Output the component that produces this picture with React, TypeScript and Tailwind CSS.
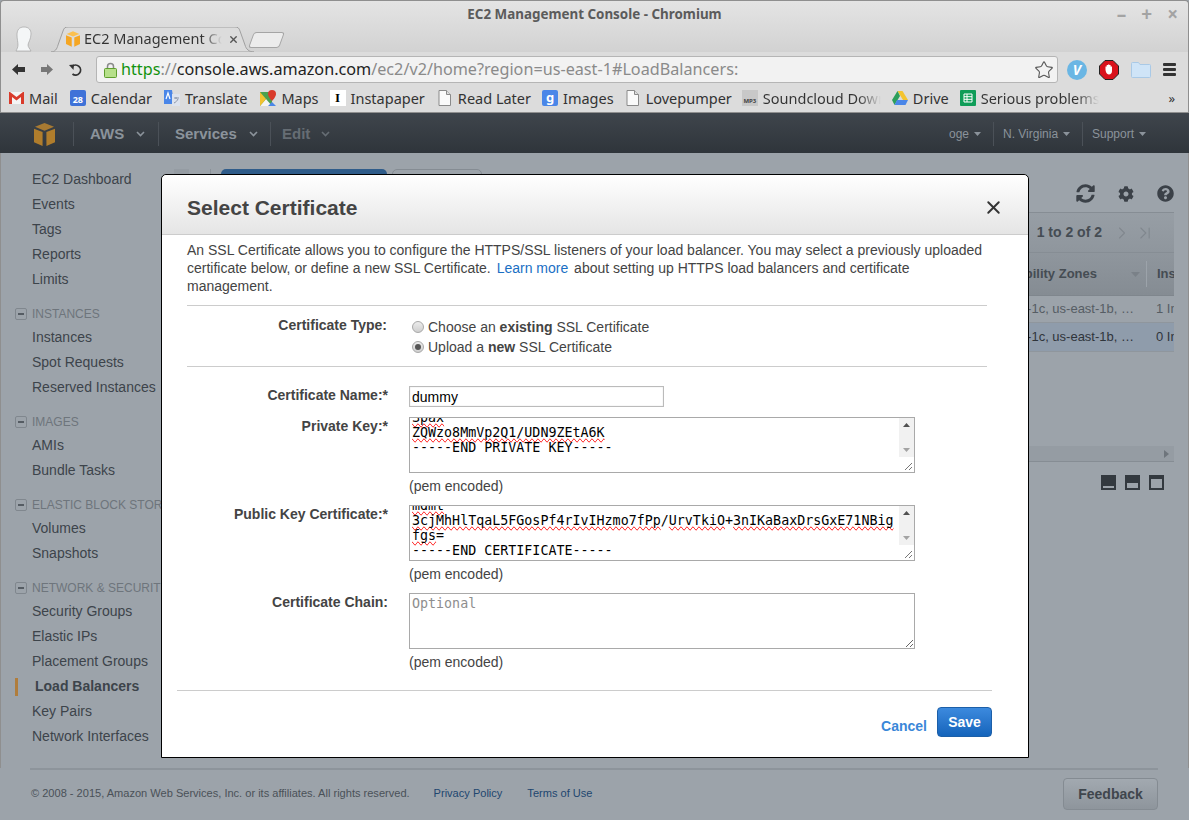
import { Star, X, ChevronRight, ChevronLast } from "lucide-react";
import { FaCog, FaQuestionCircle, FaSyncAlt } from "react-icons/fa";

const monoFont = { fontFamily: '"DejaVu Sans Mono", monospace' };

function Caret({ className }: { className: string }) {
  return (
    <svg width="9" height="6" viewBox="0 0 9 6" className={className}>
      <path d="M1 1l3.5 3.5L8 1" fill="none" stroke="currentColor" strokeWidth="1.6" />
    </svg>
  );
}

function SmallCaret() {
  return (
    <svg width="7" height="4" viewBox="0 0 7 4" className="ml-[5px] text-[#8b939b]">
      <path d="M0 0h7L3.5 4z" fill="currentColor" />
    </svg>
  );
}

function Cube({ size, light }: { size: number; light?: boolean }) {
  return (
    <svg width={size} height={size + 2} viewBox="0 0 22 24">
      <path d="M11 0l10 4-10 4L1 4z" fill={light ? "#fbc04f" : "#a87a32"} />
      <path d="M0 6l9 3.5V24l-9-4z" fill={light ? "#f5a623" : "#b07d2c"} />
      <path d="M22 6l-9 3.5V24l9-4z" fill={light ? "#f5a623" : "#b07d2c"} />
    </svg>
  );
}

function PageIcon() {
  return (
    <svg width="13" height="16" viewBox="0 0 13 16">
      <path d="M1 .5h7.5L12.5 4.500V15.500H1z" fill="#fafafa" stroke="#8a8a8a" />
      <path d="M8.500.5V4.500H12.500" fill="#ddd" stroke="#8a8a8a" />
    </svg>
  );
}

function Bookmark({ icon, label, fade, className }: { icon: React.ReactNode; label: string; fade?: boolean; className?: string }) {
  return (
    <div className={`flex items-center gap-[5px] ${className ?? ""}`}>
      <span className="flex h-4 w-4 shrink-0 items-center justify-center">{icon}</span>
      {fade ? (
        <span className="w-[118px] overflow-hidden whitespace-nowrap bg-gradient-to-r from-[#333] from-80% to-[#dcdcdc] bg-clip-text text-transparent">
          {label}
        </span>
      ) : (
        <span>{label}</span>
      )}
    </div>
  );
}

function TitleBar() {
  return (
    <div className="relative h-[52px] shrink-0 rounded-t-[4px] border-x border-t border-[#8f8f8f] bg-gradient-to-b from-[#e4e4e4] to-[#d2d2d2]">
      <p className="pt-[4px] text-center text-[13.400px] font-bold leading-[18px] text-[#5b5b5b]">
        EC2 Management Console - Chromium
      </p>
      <div className="absolute right-[10px] top-[3px] flex items-center gap-[15px] text-[19px] font-bold leading-[20px] text-[#a3a3a3]">
        <span>–</span>
        <span>+</span>
        <span>×</span>
      </div>
      <svg width="20" height="26" viewBox="0 0 20 26" className="absolute left-[13px] top-[25px]">
        <path d="M10 1C5 1 3 4 3 9c0 4 1 7 1 10 0 2-1 4-2 6h15c-1-2-3-4-3-6 0-2 3-6 3-11 0-4-2-7-7-7z" fill="#f4f6f7" stroke="#9a9a9a" strokeWidth=".6" />
      </svg>
      <div className="absolute bottom-0 left-[50px] h-[25px] w-[203px]">
        <svg width="203" height="25" viewBox="0 0 203 25" className="absolute inset-0">
          <path d="M0 25C4 25 6 22 7 18L12 4C13 1 14 0 17 0H184C187 0 188 1 189 4L194 18C195 22 198 25 203 25Z" fill="#dcdcdc" stroke="#a0a0a0" />
        </svg>
        <div className="relative flex h-full items-center pb-[1px] pl-[15px]">
          <Cube size={14} light />
          <span className="ml-[4px] w-[138px] overflow-hidden whitespace-nowrap bg-gradient-to-r from-[#333] from-85% to-[#dcdcdc] bg-clip-text text-[14.500px] text-transparent">
            EC2 Management Console
          </span>
          <X size={11} strokeWidth={3} className="ml-[6px] text-[#555]" />
        </div>
      </div>
      <div className="absolute left-[250px] top-[31px] h-[16px] w-[31px] -skew-x-[20deg] rounded-[3px] border border-[#a5a5a5] bg-[#ececec]" />
    </div>
  );
}

function Toolbar() {
  return (
    <div className="flex h-[33px] shrink-0 items-center border-x border-[#8f8f8f] bg-[#dcdcdc] pl-[11px] pt-[2px]">
      <svg width="13" height="11" viewBox="0 0 13 11">
        <path d="M0 5.500L6 0v3h7v5H6v3z" fill="#333" />
      </svg>
      <svg width="12" height="11" viewBox="0 0 12 11" className="ml-[16px]">
        <path d="M12 5.500L6 0v3H0v5h6v3z" fill="#777" />
      </svg>
      <svg width="14" height="14" viewBox="0 0 14 14" className="ml-[16px]">
        <path d="M3 3.500A5 5 0 1 1 3.500 11" fill="none" stroke="#333" strokeWidth="1.800" />
        <path d="M0 2l5-.5L4.500 7z" fill="#333" />
      </svg>
      <div className="ml-[13px] flex h-[27px] w-[962px] items-center rounded-[3px] border border-[#b5b5b5] bg-[#f2f2f2] pl-[7px] pr-[3px] text-[16.200px] leading-[25px] text-[#8a8a8a]">
        <svg width="13" height="16" viewBox="0 0 13 16">
          <path d="M3.500 7V4.500a3 3 0 0 1 6 0V7" fill="none" stroke="#8a8a8a" strokeWidth="1.500" />
          <rect x=".5" y="6.500" width="12" height="9" rx="1" fill="#b6e08a" stroke="#5f9e2f" />
        </svg>
        <span className="ml-[4px] whitespace-nowrap">
          <span className="text-[#12930f]">https</span>
          <span>://</span>
          <span className="text-[#222]">console.aws.amazon.com</span>
          /ec2/v2/home?region=us-east-1#LoadBalancers:
        </span>
        <Star size={20} strokeWidth={1.300} className="ml-auto text-[#555]" />
      </div>
      <div className="ml-[9px] flex h-[20px] w-[20px] items-center justify-center rounded-full bg-[#6ab6e4] text-[14px] font-bold italic leading-none text-white">
        V
      </div>
      <svg width="20" height="20" viewBox="0 0 20 20" className="ml-[12px]">
        <path d="M6 .5h8L19.500 6v8L14 19.500H6L.5 14V6z" fill="#d9121c" stroke="#222" />
        <path d="M6.500 10V6.500h1.200V5h1.300v-.5h1.300V5h1.300v1.500h1.400V11c0 2-1.200 3.500-3 3.500-1.500 0-2.500-1-3-2.500z" fill="#fff" />
      </svg>
      <svg width="20" height="17" viewBox="0 0 20 17" className="ml-[12px]">
        <path d="M.5 2.500a1 1 0 0 1 1-1h6l1.500 2h9.500a1 1 0 0 1 1 1v11a1 1 0 0 1-1 1h-17a1 1 0 0 1-1-1z" fill="#cfe4f7" stroke="#a9c9e6" />
      </svg>
      <div className="ml-[12px] flex w-[13px] flex-col gap-[2px]">
        <span className="h-[3px] rounded-[1px] bg-[#333]" />
        <span className="h-[3px] rounded-[1px] bg-[#333]" />
        <span className="h-[3px] rounded-[1px] bg-[#333]" />
      </div>
    </div>
  );
}

function BookmarksBar() {
  return (
    <div className="flex h-[28px] shrink-0 items-center gap-[12px] border-x border-b border-[#8f8f8f] bg-[#dcdcdc] pb-[2px] pl-[7px] text-[14.500px] leading-[20px] text-[#333]">
      <Bookmark
        icon={
          <svg width="15" height="12" viewBox="0 0 15 12">
            <rect width="15" height="12" fill="#f4f4f4" />
            <path d="M0 0v12h3V5l4.500 3.500L12 5v7h3V0h-1L7.500 5 1 0z" fill="#d93b2b" />
          </svg>
        }
        label="Mail"
      />
      <Bookmark
        icon={
          <span className="flex h-4 w-4 items-end justify-center rounded-[2px] bg-[#3f72d8] text-[9px] font-bold leading-[12px] text-white">28</span>
        }
        label="Calendar"
      />
      <Bookmark
        icon={
          <svg width="16" height="16" viewBox="0 0 16 16">
            <path d="M0 0h8l2 14H0z" fill="#4a86e8" />
            <path d="M8 4h8v12H8z" fill="#dde3ee" />
            <path d="M2 9l2-6 2 6" fill="none" stroke="#fff" strokeWidth="1.200" />
            <path d="M10 8h5M12 7v2M14 9c-1 2-2 3-4 4" fill="none" stroke="#8a94a6" />
          </svg>
        }
        label="Translate"
      />
      <Bookmark
        className="ml-[1px]"
        icon={
          <svg width="16" height="16" viewBox="0 0 16 16">
            <path d="M0 2h12v14H0z" fill="#4ba04f" />
            <path d="M0 16l6-7 6 7z" fill="#f4f4f4" />
            <path d="M0 2l6 7-6 7z" fill="#f2c230" />
            <path d="M8 16l4-4 4 4z" fill="#4a86e8" />
            <path d="M12 0a4 4 0 0 1 4 4c0 3-4 7-4 7S8 7 8 4a4 4 0 0 1 4-4z" fill="#d93b2b" />
          </svg>
        }
        label="Maps"
      />
      <Bookmark
        className="-ml-[1px]"
        icon={
          <span className="flex h-4 w-4 items-center justify-center bg-white text-[13px] font-bold leading-none text-black" style={{ fontFamily: '"Liberation Serif", serif' }}>
            I
          </span>
        }
        label="Instapaper"
      />
      <Bookmark icon={<PageIcon />} label="Read Later" />
      <Bookmark
        className="-ml-[1px]"
        icon={
          <span className="flex h-4 w-4 items-center justify-center rounded-[2px] bg-[#4a86e8] text-[13px] font-bold leading-none text-white">g</span>
        }
        label="Images"
      />
      <Bookmark className="-ml-[1px]" icon={<PageIcon />} label="Lovepumper" />
      <Bookmark
        className="-ml-[2px]"
        icon={
          <span className="flex h-4 w-4 items-end justify-center bg-[#c8c8c8] text-[6px] font-bold leading-[9px] text-[#444]">MP3</span>
        }
        label="Soundcloud Downloader"
        fade
      />
      <Bookmark
        className="-ml-[1px]"
        icon={
          <svg width="16" height="14" viewBox="0 0 16 14">
            <path d="M5.500 0h5l5.500 9h-5z" fill="#f4c430" />
            <path d="M5.500 0L0 9l2.500 5L8 5z" fill="#2d9f5b" />
            <path d="M2.500 14h11l2.500-5H5z" fill="#4a86e8" />
          </svg>
        }
        label="Drive"
      />
      <Bookmark
        className="-ml-[1px]"
        icon={
          <svg width="16" height="16" viewBox="0 0 16 16">
            <rect width="16" height="16" rx="1" fill="#0f9d58" />
            <path d="M4 4h8v8H4zM4 6.700h8M4 9.300h8M7 4v8" fill="none" stroke="#fff" />
          </svg>
        }
        label="Serious problems"
        fade
      />
      <span className="ml-auto pr-[13px] text-[13px]">»</span>
    </div>
  );
}

function TopNav() {
  return (
    <nav className="flex h-[40px] shrink-0 items-center bg-gradient-to-b from-[#3f454c] to-[#2f353b] pt-[2px] text-[#8b939b]">
      <div className="flex h-[24px] w-[74px] items-center justify-end border-r border-[#4b5158] pr-[18px]">
        <Cube size={21} />
      </div>
      <div className="flex h-[24px] w-[85px] items-center border-r border-[#4b5158] pl-[16px] text-[15px] font-bold">
        AWS
        <Caret className="ml-[12px]" />
      </div>
      <div className="flex h-[24px] w-[112px] items-center border-r border-[#4b5158] pl-[16px] text-[15px] font-bold">
        Services
        <Caret className="ml-[12px]" />
      </div>
      <div className="flex items-center pl-[11px] text-[15px] font-bold text-[#666d74]">
        Edit
        <Caret className="ml-[11px]" />
      </div>
      <div className="ml-auto flex items-center pr-[43px] text-[12px]">
        <div className="flex h-[24px] w-[45px] items-center border-r border-[#4b5158]">
          oge
          <SmallCaret />
        </div>
        <div className="flex h-[24px] w-[89px] items-center border-r border-[#4b5158] pl-[9px]">
          N. Virginia
          <SmallCaret />
        </div>
        <div className="flex items-center pl-[9px]">
          Support
          <SmallCaret />
        </div>
      </div>
    </nav>
  );
}

function SideLink({ label, active }: { label: string; active?: boolean }) {
  if (active) {
    return (
      <li className="flex h-[25px] items-center">
        <span className="ml-[14px] h-[18px] w-[3px] bg-[#b07d3c]" />
        <span className="ml-[17px] font-bold">{label}</span>
      </li>
    );
  }
  return <li className="flex h-[25px] items-center pl-[31px]">{label}</li>;
}

function SideGroup({ title, links }: { title: string; links: string[] }) {
  return (
    <div className="mt-[9px]">
      <div className="flex h-[24px] items-center pl-[14px] pt-[2px] text-[12px] text-[#6e757c]">
        <span className="mr-[5px] flex h-[12px] w-[12px] items-center justify-center rounded-[2px] border border-[#80878e]">
          <span className="h-[2px] w-[6px] bg-[#555c63]" />
        </span>
        {title}
      </div>
      <ul>
        {links.map((l) => (
          <SideLink key={l} label={l} active={l === "Load Balancers"} />
        ))}
      </ul>
    </div>
  );
}

function Sidebar() {
  return (
    <aside className="w-[186px] shrink-0 whitespace-nowrap pt-[14px] text-[14px] text-[#3d444b]">
      <ul>
        {["EC2 Dashboard", "Events", "Tags", "Reports", "Limits"].map((l) => (
          <SideLink key={l} label={l} />
        ))}
      </ul>
      <SideGroup title="INSTANCES" links={["Instances", "Spot Requests", "Reserved Instances"]} />
      <SideGroup title="IMAGES" links={["AMIs", "Bundle Tasks"]} />
      <SideGroup title="ELASTIC BLOCK STORE" links={["Volumes", "Snapshots"]} />
      <SideGroup
        title="NETWORK & SECURITY"
        links={["Security Groups", "Elastic IPs", "Placement Groups", "Load Balancers", "Key Pairs", "Network Interfaces"]}
      />
    </aside>
  );
}

function Content() {
  return (
    <section className="flex min-w-0 flex-1 flex-col pr-[14px] pt-[16px] text-[14px] text-[#454c53]">
      <div className="-ml-[13px] flex h-[43px] shrink-0 items-start">
        <span className="h-[20px] w-[15px] bg-[#959ca3]" />
        <span className="ml-[21px] h-[30px] w-px bg-[#8b9299]" />
        <span className="ml-[10px] h-[30px] w-[166px] rounded-t-[5px] bg-[#2f5c8a]" />
        <span className="ml-[5px] h-[30px] w-[90px] rounded-t-[5px] border border-[#858c93]" />
        <div className="ml-auto mr-0 mt-[15px] flex items-center gap-[23px] text-[#3b4148]">
          <FaSyncAlt size={19} />
          <FaCog size={16} />
          <FaQuestionCircle size={17} />
        </div>
      </div>
      <div className="flex h-[41px] shrink-0 items-center justify-end border-y border-[#868d94] bg-gradient-to-b from-[#979ea5] to-[#8f969d] pr-[19px]">
        <span className="font-bold">1 to 2 of 2</span>
        <ChevronRight size={20} strokeWidth={1.300} className="ml-[10px] text-[#80878e]" />
        <ChevronLast size={20} strokeWidth={1.300} className="ml-[3px] text-[#80878e]" />
      </div>
      <div className="flex h-[43px] shrink-0 items-center justify-end overflow-hidden border-b border-[#7f868d] bg-gradient-to-b from-[#8f969d] to-[#858c93] font-bold text-[13px]">
        <span className="whitespace-nowrap">Availability Zones</span>
        <svg width="9" height="5" viewBox="0 0 9 5" className="ml-[34px] text-[#7a8188]">
          <path d="M0 0h9L4.500 5z" fill="currentColor" />
        </svg>
        <span className="ml-[6px] h-[26px] w-px bg-[#9ca3aa]" />
        <span className="ml-[10px] w-[17px] overflow-hidden">Instances</span>
      </div>
      <div className="flex h-[27px] shrink-0 items-center justify-end overflow-hidden border-b border-[#8f969d] text-[13px] text-[#565d64]">
        <span className="whitespace-nowrap">us-east-1c, us-east-1b, …</span>
        <span className="ml-[22px] w-[18px] overflow-hidden whitespace-nowrap">1 Instance</span>
      </div>
      <div className="flex h-[29px] shrink-0 items-center justify-end overflow-hidden border-b border-[#8f969d] bg-[#8f9cab] text-[13px] text-[#2f353b]">
        <span className="whitespace-nowrap">us-east-1c, us-east-1b, …</span>
        <span className="ml-[22px] w-[18px] overflow-hidden whitespace-nowrap">0 Instance</span>
      </div>
      <div className="flex-1" />
      <div className="flex h-[16px] shrink-0 items-center justify-end border-b border-[#868d94] bg-[#959ca3] pr-[5px]">
        <svg width="5" height="8" viewBox="0 0 5 8">
          <path d="M0 0l5 4-5 4z" fill="#6e757c" />
        </svg>
      </div>
      <div className="mb-[278px] mt-[13px] flex shrink-0 justify-end gap-[9px] pr-[10px]">
        <span className="flex h-[15px] w-[15px] items-end bg-[#33393f] p-[2px] pt-0"><span className="h-[2px] w-full bg-[#9ca3aa]" /></span>
        <span className="flex h-[15px] w-[15px] items-end bg-[#33393f]"><span className="mx-[2px] mb-[2px] h-[5px] w-full bg-[#9ca3aa]" /></span>
        <span className="flex h-[15px] w-[15px] items-end bg-[#33393f]"><span className="mx-[2px] mb-[2px] h-[9px] w-full bg-[#9ca3aa]" /></span>
      </div>
    </section>
  );
}

function Footer() {
  return (
    <footer className="ml-[30px] mr-[31px] flex h-[52px] shrink-0 items-center border-t-2 border-[#8d949b] pl-[1px] text-[11.050px] text-[#4a5158]">
      <span className="pb-[3px]">© 2008 - 2015, Amazon Web Services, Inc. or its affiliates. All rights reserved.</span>
      <a className="ml-[24px] pb-[3px] text-[#21466f]">Privacy Policy</a>
      <a className="ml-[25px] pb-[3px] text-[#21466f]">Terms of Use</a>
      <button className="mb-[2px] ml-auto h-[32px] w-[95px] rounded-[4px] border border-[#848b92] bg-gradient-to-b from-[#a2a9b0] to-[#8e959c] text-[14px] font-bold text-[#3f464d]">
        Feedback
      </button>
    </footer>
  );
}

function Spell({ children }: { children: string }) {
  return <span className="[text-decoration-line:spelling-error]">{children}</span>;
}

function KeyBox({ lines }: { lines: React.ReactNode[] }) {
  return (
    <div className="flex h-[56px] w-[506px] overflow-hidden border border-[#a9a9a9] bg-white text-[13.330px] leading-[15px] text-black" style={monoFont}>
      <div className="min-w-0 flex-1 overflow-hidden pl-[2px]">
        <div className="-mt-[8px] whitespace-nowrap">
          {lines.map((line, i) => (
            <div key={i}>{line}</div>
          ))}
        </div>
      </div>
      <div className="flex w-[15px] shrink-0 flex-col bg-[#f1f1f1]">
        <svg width="15" height="15" viewBox="0 0 15 15">
          <path d="M4 9l3.500-4L11 9z" fill="#505050" />
        </svg>
        <svg width="15" height="15" viewBox="0 0 15 15" className="mt-[9px]">
          <path d="M4 6l3.500 4L11 6z" fill="#a3a3a3" />
        </svg>
        <div className="mt-auto flex h-[15px] items-end justify-end bg-white">
          <svg width="15" height="15" viewBox="0 0 15 15">
            <path d="M13 6l-7 7M13 10l-3 3" stroke="#777" />
          </svg>
        </div>
      </div>
    </div>
  );
}

function PemRow({ label, children }: { label: string; children: React.ReactNode }) {
  return (
    <div className="flex h-[88px]">
      <label className="w-[201px] shrink-0 text-right font-bold">{label}</label>
      <div className="ml-[21px]">
        {children}
        <p className="pt-[4px]">(pem encoded)</p>
      </div>
    </div>
  );
}

function Radio({ on }: { on?: boolean }) {
  return (
    <span className="mr-[4px] flex h-[12px] w-[12px] items-center justify-center rounded-full border border-[#a8a8a8] bg-gradient-to-b from-[#ececec] to-[#cfcfcf]">
      {on && <span className="h-[6px] w-[6px] rounded-full bg-[#555]" />}
    </span>
  );
}

function Modal() {
  return (
    <div className="absolute left-[161px] top-[174px] h-[584px] w-[868px] rounded-t-[5px] border border-black bg-white text-[14px] leading-[18px] text-[#444]">
      <header className="flex h-[60px] items-center justify-between rounded-t-[5px] border-b border-[#ccc] bg-gradient-to-b from-white to-[#e5e5e5] pl-[25px] pr-[26px] pt-[6px]">
        <h2 className="text-[21px] font-bold text-[#444]">Select Certificate</h2>
        <X size={21} strokeWidth={2.200} className="-mr-[2px] text-[#333]" />
      </header>
      <div className="px-[25px] pt-[6px]">
        <div className="w-[800px]">
          <p className="h-[64px]">
            An SSL Certificate allows you to configure the HTTPS/SSL listeners of your load balancer. You may select a previously uploaded
            certificate below, or define a new SSL Certificate. <a className="ml-[2px] mr-[2px] text-[#1a6fc4]">Learn more</a> about setting up HTTPS load balancers and certificate
            management.
          </p>
          <div className="flex h-[61px] border-t border-[#ccc]">
            <label className="w-[200px] shrink-0 pt-[10px] text-right font-bold">Certificate Type:</label>
            <div className="ml-[25px] pt-[11px] leading-[20px]">
              <div className="flex items-center"><Radio />Choose an&nbsp;<b>existing</b>&nbsp;SSL Certificate</div>
              <div className="flex items-center"><Radio on />Upload a&nbsp;<b>new</b>&nbsp;SSL Certificate</div>
            </div>
          </div>
          <div className="flex h-[51px] border-t border-[#ccc] pt-[19px]">
            <label className="w-[201px] shrink-0 text-right font-bold">Certificate Name:*</label>
            <input
              readOnly
              value="dummy"
              className="ml-[21px] h-[21px] w-[255px] border border-[#bbb] px-[2px] text-[14px] text-black shadow-[inset_0_0_1px_#bbb] outline-none"
            />
          </div>
          <PemRow label="Private Key:*">
            <KeyBox
              lines={[
                <Spell>Spax</Spell>,
                <Spell>ZQWzo8MmVp2Q1/UDN9ZEtA6K</Spell>,
                "-----END PRIVATE KEY-----",
              ]}
            />
          </PemRow>
          <PemRow label="Public Key Certificate:*">
            <KeyBox
              lines={[
                <Spell>mdmt</Spell>,
                <>
                  <Spell>3cjMhHlTqaL5FGosPf4rIvIHzmo7fPp</Spell>/<Spell>UrvTkiO</Spell>+<Spell>3nIKaBaxDrsGxE71NBig</Spell>
                </>,
                <><Spell>fgs</Spell>=</>,
                "-----END CERTIFICATE-----",
              ]}
            />
          </PemRow>
          <PemRow label="Certificate Chain:">
            <textarea
              readOnly
              placeholder="Optional"
              className="block h-[56px] w-[506px] border border-[#a9a9a9] px-[2px] py-[2px] text-[13.330px] leading-[15px] outline-none placeholder:text-[#8e8e8e]"
              style={monoFont}
            />
          </PemRow>
        </div>
      </div>
      <div className="mx-[15px] mt-[9px] flex w-[815px] items-start justify-end border-t border-[#ccc] pt-[16px]">
        <a className="mr-[10px] mt-[10px] font-bold text-[#3a87d8]">Cancel</a>
        <button className="h-[30px] w-[55px] rounded-[4px] border border-[#1c5fa8] bg-gradient-to-b from-[#3c8ade] to-[#1464bb] text-[14px] font-bold text-white">
          Save
        </button>
      </div>
    </div>
  );
}

export default function App() {
  return (
    <div className="relative flex h-[820px] w-[1189px] flex-col overflow-hidden bg-[#9ca3aa]" style={{ fontFamily: '"Liberation Sans", Arial, sans-serif' }}>
      <div className="shrink-0" style={{ fontFamily: '"Noto Sans", sans-serif' }}>
        <TitleBar />
        <Toolbar />
        <BookmarksBar />
      </div>
      <TopNav />
      <div className="flex min-h-0 flex-1 border-x border-[#8f8f8f]">
        <Sidebar />
        <Content />
      </div>
      <Footer />
      <Modal />
    </div>
  );
}
